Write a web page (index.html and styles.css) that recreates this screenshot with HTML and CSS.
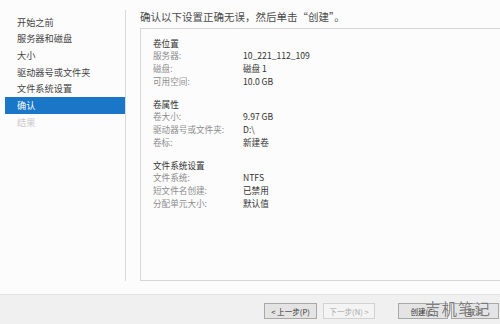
FILE: index.html
```html
<!DOCTYPE html>
<html lang="zh-CN">
<head>
    <meta charset="UTF-8">
    <title>新建卷向导 - 确认</title>
    <link rel="stylesheet" href="styles.css">
</head>
<body>
    <div class="wizard">
        <div class="main">
            <ul class="steps">
                <li>开始之前</li>
                <li>服务器和磁盘</li>
                <li>大小</li>
                <li>驱动器号或文件夹</li>
                <li>文件系统设置</li>
                <li class="active">确认</li>
                <li class="disabled">结果</li>
            </ul>

            <div class="content">
                <h1>确认以下设置正确无误，然后单击“创建”。</h1>

                <div class="summary">
                    <div class="group">
                        <div class="group-title">卷位置</div>
                        <div class="row"><span class="label">服务器:</span><span class="value">10_221_112_109</span></div>
                        <div class="row"><span class="label">磁盘:</span><span class="value">磁盘 1</span></div>
                        <div class="row"><span class="label">可用空间:</span><span class="value">10.0 GB</span></div>
                    </div>
                    <div class="group">
                        <div class="group-title">卷属性</div>
                        <div class="row"><span class="label">卷大小:</span><span class="value">9.97 GB</span></div>
                        <div class="row"><span class="label">驱动器号或文件夹:</span><span class="value">D:\</span></div>
                        <div class="row"><span class="label">卷标:</span><span class="value">新建卷</span></div>
                    </div>
                    <div class="group">
                        <div class="group-title">文件系统设置</div>
                        <div class="row"><span class="label">文件系统:</span><span class="value">NTFS</span></div>
                        <div class="row"><span class="label">短文件名创建:</span><span class="value">已禁用</span></div>
                        <div class="row"><span class="label">分配单元大小:</span><span class="value">默认值</span></div>
                    </div>
                </div>
            </div>
        </div>

        <div class="footer">
            <button class="btn btn-prev">&lt; 上一步(P)</button>
            <button class="btn btn-next" disabled>下一步(N) &gt;</button>
            <button class="btn btn-create">创建(C)</button>
            <button class="btn btn-cancel">取消</button>
            <span class="watermark">吉机笔记</span>
        </div>
    </div>
</body>
</html>
```

FILE: styles.css
```css
* {
    box-sizing: border-box;
    font-family: 'Noto Sans CJK SC', 'Noto Sans', sans-serif;
}

body {
    margin: 0;
    background: #fcfcfc;
}

.wizard {
    width: 500px;
    height: 324px;
    display: flex;
    flex-direction: column;
    overflow: hidden;
}

.main {
    height: 294px;
    display: flex;
}

/* left step list */
.steps {
    list-style: none;
    margin: 10px 0 0 0;
    padding: 3.7px 0 0 5px;
    width: 126px;
    height: 271px;
    border-right: 1px solid #d9d9d9;
}

.steps li {
    height: 16.67px;
    line-height: 16.67px;
    padding-left: 12px;
    font-size: 9.2px;
    color: #444;
    white-space: nowrap;
}

.steps li.active {
    background: #1a76c6;
    color: #fff;
}

.steps li.disabled {
    color: #c9c9c9;
}

/* right side */
.content {
    flex: 1;
    padding: 10px 0 0 14px;
}

h1 {
    margin: 0;
    height: 18px;
    line-height: 14px;
    font-size: 10.5px;
    font-weight: normal;
    color: #4a4a4a;
    white-space: nowrap;
}

.summary {
    height: 253px;
    border-top: 1px solid #d6d6d6;
    border-left: 1px solid #d6d6d6;
    border-bottom: 1px solid #d6d6d6;
    padding: 7.5px 0 0 12px;
}

.group + .group {
    margin-top: 10.3px;
}

.group-title,
.row {
    height: 12.7px;
    line-height: 12.7px;
    font-size: 8.6px;
    white-space: nowrap;
}

.group-title {
    color: #333;
}

.row {
    display: flex;
}

.label {
    width: 90px;
    color: #8c8c8c;
}

.value {
    color: #333;
}

/* bottom button bar */
.footer {
    position: relative;
    flex: 1;
    display: flex;
    align-items: flex-start;
    justify-content: flex-end;
    padding: 8px 1px 0 0;
    background: #f0f0f0;
    border-top: 1px solid #e2e2e2;
}

.btn {
    height: 16px;
    padding: 0;
    font-size: 7.6px;
    color: #333;
    background: #e4e4e4;
    border: 1px solid #a8a8a8;
}

.btn:disabled {
    color: #a9a9a9;
    background: #f4f4f4;
    border-color: #d2d2d2;
}

.btn-prev {
    width: 53px;
}

.btn-next {
    width: 52px;
    margin-left: 6px;
}

.btn-create {
    width: 50px;
    margin-left: 23px;
}

.btn-cancel {
    width: 48px;
    margin-left: 3px;
}

.watermark {
    position: absolute;
    left: 425px;
    top: 2px;
    font-size: 15.5px;
    letter-spacing: 1px;
    color: rgba(90, 90, 90, 0.8);
    text-shadow: 0 0 1px #fff;
}
```
